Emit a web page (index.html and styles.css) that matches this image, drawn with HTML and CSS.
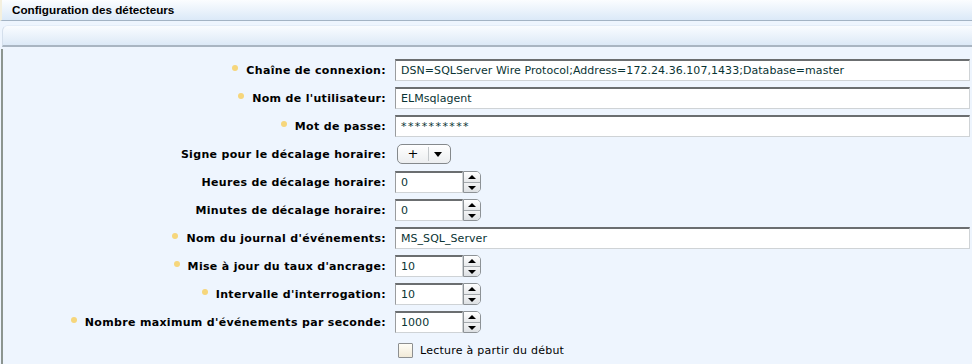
FILE: index.html
```html
<!DOCTYPE html>

<html>

<head>
	<meta http-equiv="content-type" content="text/html; charset=utf-8" />
	<title>Configuration des détecteurs</title>
	<link rel="stylesheet" href="styles.css">
</head>

<body>
	<div class="titlebar">Configuration des détecteurs</div>
	<div class="toolbar"></div>

	<div class="panel">
		<div class="form">
			<label class="req" for="conn">Chaîne de connexion:</label>
			<div class="field"><input type="text" id="conn" class="wide" value="DSN=SQLServer Wire Protocol;Address=172.24.36.107,1433;Database=master" /></div>

			<label class="req" for="user">Nom de l'utilisateur:</label>
			<div class="field"><input type="text" id="user" class="wide" value="ELMsqlagent" /></div>

			<label class="req" for="pass">Mot de passe:</label>
			<div class="field"><input type="text" id="pass" class="wide secret" value="**********" /></div>

			<label for="sign">Signe pour le décalage horaire:</label>
			<div class="field">
				<div class="select" id="sign">
					<span class="select-value">+</span>
					<span class="select-arrow"></span>
				</div>
			</div>

			<label for="hours">Heures de décalage horaire:</label>
			<div class="field">
				<input type="text" id="hours" class="num" value="0" />
				<div class="spin"><span class="up"></span><span class="down"></span></div>
			</div>

			<label for="mins">Minutes de décalage horaire:</label>
			<div class="field">
				<input type="text" id="mins" class="num" value="0" />
				<div class="spin"><span class="up"></span><span class="down"></span></div>
			</div>

			<label class="req" for="journal">Nom du journal d'événements:</label>
			<div class="field"><input type="text" id="journal" class="wide" value="MS_SQL_Server" /></div>

			<label class="req" for="rate">Mise à jour du taux d'ancrage:</label>
			<div class="field">
				<input type="text" id="rate" class="num" value="10" />
				<div class="spin"><span class="up"></span><span class="down"></span></div>
			</div>

			<label class="req" for="poll">Intervalle d'interrogation:</label>
			<div class="field">
				<input type="text" id="poll" class="num" value="10" />
				<div class="spin"><span class="up"></span><span class="down"></span></div>
			</div>

			<label class="req" for="max">Nombre maximum d'événements par seconde:</label>
			<div class="field">
				<input type="text" id="max" class="num" value="1000" />
				<div class="spin"><span class="up"></span><span class="down"></span></div>
			</div>

			<div></div>
			<div class="field check">
				<span class="box"></span>
				<span class="check-label">Lecture à partir du début</span>
			</div>
		</div>
	</div>
</body>

</html>
```

FILE: styles.css
```css
body {
	font-family: "DejaVu Sans", Verdana, sans-serif;
	background-color: #eef5fe;
	margin: 0;
	padding: 0;
	height: 364px;
	overflow: hidden;
}

/* Window title */
.titlebar {
	height: 20px;
	line-height: 20px;
	padding-left: 10px;
	font-family: "Liberation Sans", Arial, sans-serif;
	font-weight: bold;
	font-size: 11.7px;
	color: #000;
	background: linear-gradient(#fbfdff, #dbe9f8);
	border-bottom: 1px solid #a3b3c4;
	border-left: 2px solid #f4f0df;
}

/* Empty tool strip */
.toolbar {
	height: 19px;
	margin-top: 4px;
	margin-left: 2px;
	border-top-left-radius: 6px;
	background: linear-gradient(#fafcff, #dce9f7);
	border-top: 1px solid #e4edf8;
	border-left: 1px solid #d4dfec;
	border-bottom: 2px solid #a9b5c2;
}

/* Form area */
.panel {
	margin-top: 2px;
	margin-left: 1px;
	border-left: 2px solid #8c9590;
	height: 320px;
}

.form {
	display: grid;
	grid-template-columns: 383px 1fr;
	column-gap: 9px;
	row-gap: 6px;
	padding: 10px 2px 0 0;
	grid-auto-rows: 22px;
}

.form label {
	justify-self: end;
	align-self: center;
	font-weight: bold;
	font-size: 11px;
	letter-spacing: 0.32px;
	color: #000;
	white-space: nowrap;
}

.form label.req::before {
	content: "";
	display: inline-block;
	width: 6px;
	height: 6px;
	border-radius: 50%;
	background-color: #f6d67c;
	margin-right: 8px;
	vertical-align: 3px;
}

.field {
	display: flex;
	align-items: center;
	height: 22px;
}

input[type="text"] {
	height: 22px;
	box-sizing: border-box;
	padding: 0 5px;
	font-family: "DejaVu Sans", Verdana, sans-serif;
	font-size: 11px;
	letter-spacing: 0.05px;
	color: #0a3434;
	background-color: #fff;
	border: 1px solid #cfd3d6;
	border-top: 2px solid #6b6e70;
	border-left: 1px solid #9a9c9e;
	outline: none;
}

input.wide {
	width: 100%;
}

input.secret {
	letter-spacing: 1.4px;
}

input.num {
	width: 68px;
}

/* Up / down buttons */
.spin {
	width: 18px;
	height: 22px;
	box-sizing: border-box;
	border: 1px solid #8d9296;
	border-radius: 0 5px 5px 0;
	display: flex;
	flex-direction: column;
	overflow: hidden;
}

.spin span {
	flex: 1;
	position: relative;
	background: linear-gradient(#ffffff, #e7e9eb);
}

.spin .down {
	border-top: 1px solid #a3a8ac;
	background: linear-gradient(#f3f4f5, #dde0e3);
}

.spin span::after {
	content: "";
	position: absolute;
	left: 4px;
	top: 3px;
	border-left: 4px solid transparent;
	border-right: 4px solid transparent;
}

.spin .up::after {
	border-bottom: 4px solid #000;
}

.spin .down::after {
	top: 3px;
	border-top: 4px solid #000;
}

/* Dropdown button */
.select {
	margin-left: 2px;
	width: 54px;
	height: 20px;
	box-sizing: border-box;
	border: 1px solid #85898c;
	border-radius: 5px;
	background: linear-gradient(#ffffff, #eceef0);
	display: flex;
	align-items: center;
}

.select-value {
	width: 30px;
	text-align: center;
	font-size: 13px;
	border-right: 1px solid #c4c8cb;
	line-height: 14px;
}

.select-arrow {
	margin-left: 5px;
	border-left: 4px solid transparent;
	border-right: 4px solid transparent;
	border-top: 5px solid #000;
}

/* Checkbox row */
.check {
	margin-left: 3px;
}

.box {
	width: 13px;
	height: 13px;
	border: 1px solid #8d8f90;
	background: linear-gradient(#fffdf6, #f1ead8);
	border-radius: 1px;
}

.check-label {
	margin-left: 7px;
	font-size: 11px;
	letter-spacing: 0.25px;
	color: #000;
}
```
